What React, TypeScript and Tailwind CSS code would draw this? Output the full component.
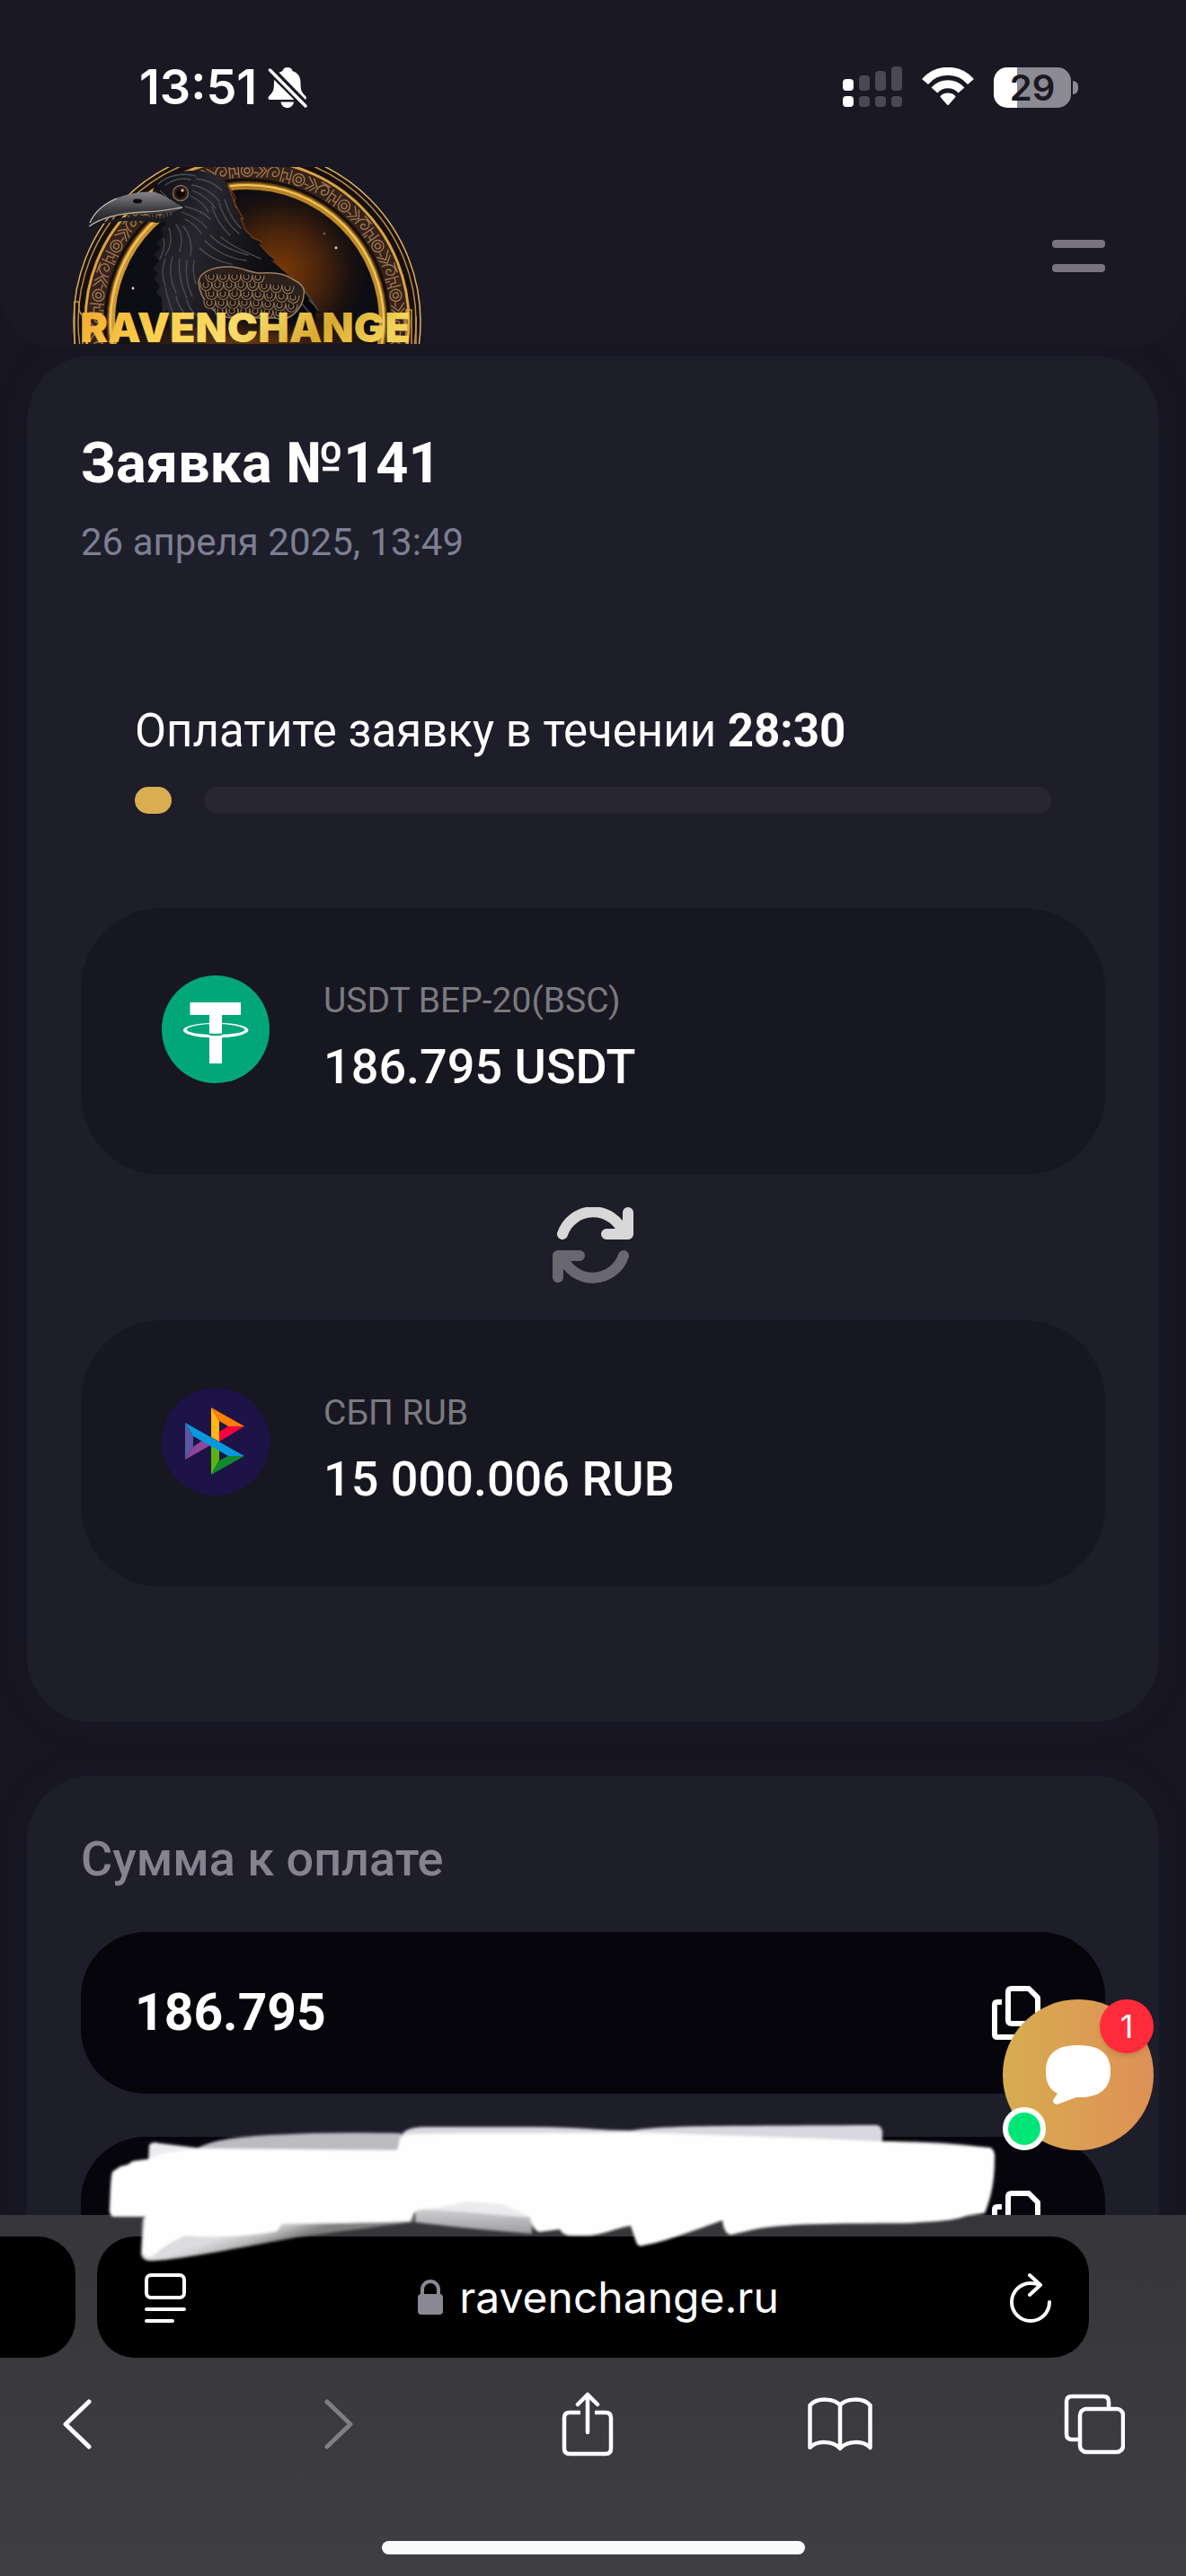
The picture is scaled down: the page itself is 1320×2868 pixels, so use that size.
import { ReactNode } from "react";

type Exchange = {
  label: string;
  value: string;
  icon: ReactNode;
};

// Small runes that run along the stone arch of the logo
const RUNES = Array.from({ length: 41 }, (_, i) => -100 + i * 5);

// Feather scales of the raven's wing, row by row
const FEATHERS = [
  { y: 309, from: 236, to: 292 },
  { y: 318, from: 230, to: 324 },
  { y: 328, from: 236, to: 330 },
  { y: 338, from: 234, to: 328 },
  { y: 347, from: 246, to: 322 },
].flatMap((row) => {
  const cells = [];
  for (let x = row.from; x <= row.to; x += 13) cells.push({ x, y: row.y + Math.max(0, x - 280) / 12 });
  return cells;
});

function RavenLogo() {
  return (
    <svg viewBox="78 186 396 198" className="h-[198px] w-[396px] overflow-visible" role="img" aria-label="RavenChange">
      <defs>
        <clipPath id="frame">
          <rect x="78" y="186" width="396" height="197" />
        </clipPath>
        <radialGradient id="glow" gradientUnits="userSpaceOnUse" cx="312" cy="302" r="98">
          <stop offset="0" stopColor="#7a3a08" />
          <stop offset="0.45" stopColor="#4a240b" />
          <stop offset="0.8" stopColor="#1a1110" />
          <stop offset="1" stopColor="#0d0d14" />
        </radialGradient>
        <linearGradient id="ring" x1="0" y1="0" x2="1" y2="0">
          <stop offset="0" stopColor="#d29a35" />
          <stop offset="0.5" stopColor="#b07a22" />
          <stop offset="1" stopColor="#c58e2c" />
        </linearGradient>
        <linearGradient id="gold" x1="0" y1="0" x2="1" y2="0.15">
          <stop offset="0" stopColor="#f0a52b" />
          <stop offset="0.3" stopColor="#fbcf4c" />
          <stop offset="0.55" stopColor="#f8dc6c" />
          <stop offset="0.8" stopColor="#d9a92f" />
          <stop offset="1" stopColor="#f2d257" />
        </linearGradient>
        <linearGradient id="beak" x1="0" y1="0" x2="0" y2="1">
          <stop offset="0" stopColor="#85858a" />
          <stop offset="0.5" stopColor="#3c3c41" />
          <stop offset="1" stopColor="#17171b" />
        </linearGradient>
        <linearGradient id="body" x1="0" y1="0" x2="1" y2="0.4">
          <stop offset="0" stopColor="#0e0e12" />
          <stop offset="0.35" stopColor="#26262c" />
          <stop offset="0.7" stopColor="#111115" />
          <stop offset="1" stopColor="#09090c" />
        </linearGradient>
        <radialGradient id="base">
          <stop offset="0" stopColor="#a8560d" stopOpacity="0.6" />
          <stop offset="1" stopColor="#5a2a08" stopOpacity="0" />
        </radialGradient>
      </defs>
      <g clipPath="url(#frame)">
        <circle cx="275" cy="358" r="193" fill="#170f0d" stroke="#dcb25e" strokeWidth="1.5" />
        <circle cx="275" cy="358" r="188" fill="none" stroke="#b98f4a" strokeWidth="1.5" />
        <circle cx="275" cy="358" r="180" fill="#35221a" stroke="#d9a441" strokeWidth="3" />
        <g fill="none" stroke="#a07650" strokeWidth="1.4">
          {RUNES.map((angle, i) => (
            <g key={angle} transform={`rotate(${angle} 275 358) translate(275 190)`}>
              {i % 4 === 0 && (
                <>
                  <circle r="6.500" />
                  <circle r="3" />
                </>
              )}
              {i % 4 === 1 && <path d="M-6-8L3-1L-4 7M0-8L7-1L1 7M-7 2H-2" />}
              {i % 4 === 2 && <path d="M-6 6C-8-4 0-10 5-5C9 0 3 6 0 3C-2 0 1-3 3-1M-6-8H6" />}
              {i % 4 === 3 && <path d="M-5-8V8M5-8V8M-5-3H1V3H5M-2 8V3" />}
            </g>
          ))}
        </g>
        <circle cx="275" cy="358" r="158" fill="none" stroke="#150e0b" strokeWidth="3" />
        <circle cx="275" cy="358" r="151" fill="url(#glow)" stroke="url(#ring)" strokeWidth="8" />
        <circle cx="275" cy="358" r="152" fill="none" stroke="#f0c860" strokeWidth="2" />
        <circle cx="275" cy="358" r="155" fill="none" stroke="#6a4415" strokeWidth="1.5" />
        <g fill="#e8dccb">
          <circle cx="148" cy="321" r="1.4" />
          <circle cx="374" cy="276" r="1.4" />
          <circle cx="361" cy="260" r="0.8" />
        </g>
        {/* body */}
        <path
          d="M170 214C172 200 190 191 212 190C234 189 248 198 256 207L253 206L260 220L268 240L266 238L271 254L282 266L292 270L288 268L298 282L306 290L302 290L316 302L330 315L358 350L352 347L350 384H192L186 344L181 352L180 332L174 326L178 318L171 310L176 304L170 300L177 290L171 284L178 276L174 270L182 262L178 256L184 250Z"
          fill="url(#body)"
        />
        <g fill="none" stroke="#4d4d56" strokeWidth="1.3" strokeLinecap="round">
          <path d="M176 205C186 195 204 192 218 196M184 206C194 199 204 198 212 200M218 199C230 200 240 205 247 212" />
          <path d="M214 206C226 208 238 216 244 224M214 212C226 217 234 223 240 232M212 218C220 222 228 228 232 236" />
          <path d="M206 230C216 232 226 236 234 244M202 236C214 240 224 246 230 254M206 244C214 248 220 254 224 260" />
          <path d="M236 230C240 244 248 254 256 262M244 226C248 240 256 252 266 260M250 222C254 236 260 246 268 254" />
          <path d="M196 250C202 258 204 268 200 280M188 254C192 264 190 276 184 284M204 252C212 262 214 272 212 284M182 266C184 272 182 280 178 288" />
          <path d="M234 262C246 274 260 280 276 284M228 268C240 280 256 288 274 290M222 276C232 286 244 292 258 294M246 264C258 274 272 280 290 288" />
          <path d="M184 288C180 298 180 308 184 318M192 286C188 300 190 314 196 326M200 288C198 302 202 318 208 332M208 290C206 304 208 318 214 330M216 290C214 300 216 308 218 316" />
          <path d="M184 320C186 332 190 342 194 352M196 330C198 340 202 346 208 352M208 334C210 342 214 348 220 352M340 324L354 346M334 336L346 350M344 334L352 342" />
        </g>
        <g fill="none" stroke="#7a3d12" strokeWidth="1.2">
          <path d="M254 206L262 220L261 226L271 244L268 243L273 256L282 265L292 269M289 272L300 284L307 289M256 212L263 232" />
        </g>
        {/* beak */}
        <path d="M98 253C104 236 116 224 134 219C148 214 162 213 172 214C182 216 192 224 204 231C190 240 176 238 160 238C134 238 114 243 98 253Z" fill="url(#beak)" />
        <path d="M108 250C128 241 152 240 176 240L200 236C196 244 186 248 174 248C150 244 130 246 108 250Z" fill="#1d1d21" />
        <path d="M99 252C116 240 138 237 160 236C178 236 190 233 203 231" fill="none" stroke="#b7aea5" strokeWidth="1.3" />
        <path d="M100 248C106 234 118 226 130 221" fill="none" stroke="#c4c4c8" strokeWidth="1.3" />
        <ellipse cx="153" cy="224" rx="5" ry="2.4" fill="#0c0c0f" />
        <path d="M172 213L188 227M178 212L190 224M170 217L178 226M162 238V241M166 238V242M170 238V242M174 238V243M178 238V243M182 238V242M186 237V241M190 236V240" stroke="#7c6152" strokeWidth="1" />
        <circle cx="201" cy="215" r="8.500" fill="#2a1d19" stroke="#7d6a5a" strokeWidth="1.5" />
        <circle cx="201" cy="215" r="5" fill="#0e0908" />
        <circle cx="203" cy="212" r="1.8" fill="#c9ad98" />
        {/* wing */}
        <path d="M221 314C222 302 240 296 257 297C272 298 280 305 292 304C306 303 318 305 326 311C336 316 340 322 338 328C338 338 330 350 320 354H257C240 352 222 334 221 314Z" fill="#2c201c" stroke="#9d7f62" strokeWidth="1.5" />
        <g fill="#1f1715" stroke="#947658" strokeWidth="1.2">
          {FEATHERS.map((f) => (
            <path key={`${f.x}-${f.y}`} d={`M${f.x - 7} ${f.y - 4}C${f.x - 8} ${f.y + 8} ${f.x + 6} ${f.y + 9} ${f.x + 6} ${f.y - 3}M${f.x - 3} ${f.y - 3}a3 3 0 1 0 4 0`} />
          ))}
        </g>
        <ellipse cx="275" cy="380" rx="170" ry="26" fill="url(#base)" />
        <path d="M83 384V336H88V346L92 352V384M452 384V345H458V384M463 384V352" fill="none" stroke="#c89a48" strokeWidth="1.5" />
      </g>
      <text x="273" y="381" textAnchor="middle" fontSize="46" className="font-['Inter',sans-serif] font-black" fill="url(#gold)">
        RAVENCHANGE
      </text>
    </svg>
  );
}

function StatusBar() {
  return (
    <div className="flex h-[186px] items-start justify-between pt-[67px] pr-[120px] pl-[155px] font-['Inter',sans-serif] text-white">
      <div className="flex h-[60px] items-center gap-3">
        <span className="text-[54px] leading-[60px] font-semibold">13:51</span>
        <svg viewBox="0 0 44 46" className="h-[46px] w-[44px]" fill="white">
          <path d="M22 1C25 1 27 2.500 27.500 5C34 7 36.500 12 36.500 18C36.500 27 38 29 42 33C43.500 35 43 37 40.500 37H3C0 37 0 34.500 1.500 33C5.500 29 7 27 7 18C7 12 10 7 16.500 5C17 2.500 19 1 22 1Z" />
          <path d="M14.500 39.500H29C28.500 43.500 25.500 46 21.700 46C18 46 15 43.500 14.500 39.500Z" />
          <path d="M4 1L45 43" stroke="#1a1823" strokeWidth="4" />
          <path d="M2 4L42 44" stroke="#1a1823" strokeWidth="8" />
          <path d="M2.500 4L42 44" stroke="white" strokeWidth="3.500" strokeLinecap="round" />
        </svg>
      </div>
      <div className="flex h-[60px] items-center">
        <svg viewBox="0 0 66 46" className="h-[46px] w-[66px]">
          <g fill="#4a4853">
            <rect x="18" y="10" width="12" height="17" rx="4" />
            <rect x="36" y="5" width="12" height="22" rx="4" />
            <rect x="54" y="0" width="12" height="27" rx="4" />
            <rect x="18" y="33" width="12" height="12" rx="4" />
            <rect x="36" y="33" width="12" height="12" rx="4" />
            <rect x="54" y="33" width="12" height="12" rx="4" />
          </g>
          <rect y="14" width="12" height="13" rx="4" fill="white" />
          <rect y="33" width="12" height="12" rx="4" fill="white" />
        </svg>
        <svg viewBox="0 0 58 44" className="ml-[22px] h-[44px] w-[58px]" fill="none" stroke="white" strokeWidth="9">
          <path d="M3.500 16A33.500 33.500 0 0 1 54.500 16" />
          <path d="M14 25.500A20 20 0 0 1 44 25.500" />
          <path d="M21.500 32.500A11 11 0 0 1 36.500 32.500L29 41Z" fill="white" stroke="white" strokeWidth="2" strokeLinejoin="round" />
        </svg>
        <div className="ml-[22px] flex h-[45px] w-[86px] items-center justify-center rounded-[15px] bg-linear-to-r from-white from-30% to-[#8c8a93] to-30%">
          <span className="text-[40px] leading-[45px] font-semibold text-[#1a1823]">29</span>
        </div>
        <span className="ml-[2px] h-[15px] w-[6px] rounded-r-full bg-[#8c8a93]" />
      </div>
    </div>
  );
}

function TetherIcon() {
  return (
    <svg viewBox="0 0 120 120" className="h-[120px] w-[120px] shrink-0">
      <circle cx="60" cy="60" r="60" fill="#03a67a" />
      <path d="M31.500 30H88V44H67V98H53V44H31.500Z" fill="white" />
      <path
        fillRule="evenodd"
        d="M24 61C24 56.500 40 52.700 60 52.700S96.500 56.500 96.500 61S80 69.500 60 69.500S24 65.500 24 61ZM28 60.500C28 63.500 42 66 60 66S92.500 63.500 92.500 60.500S78 54 60 54S28 57 28 60.500Z"
        fill="white"
      />
      <path d="M53 65.500Q60 66.500 67 65.500" fill="none" stroke="#03a67a" strokeWidth="2" />
      <path d="M53 50H67V64H53Z" fill="white" />
    </svg>
  );
}

function SbpIcon() {
  return (
    <svg viewBox="0 0 120 120" className="h-[120px] w-[120px] shrink-0">
      <circle cx="60" cy="60" r="60" fill="#1d1346" />
      <path d="M26 39L35 54V66L26 80Z" fill="#5b57a2" />
      <path d="M26 80L35 66L46 58L56 63Z" fill="#90479a" />
      <path d="M55 22L64 37V60L55 55Z" fill="#fdb813" />
      <path d="M55 22L92 43H74L64 37Z" fill="#ff7f00" />
      <path d="M92 43L64 60V49L74 43Z" fill="#f4053f" />
      <path d="M55 62L64 68V81L55 97Z" fill="#5fb112" />
      <path d="M92 76L55 97L64 81L74 76Z" fill="#0f8a2f" />
      <path d="M26 39L92 76H74L35 54Z" fill="#0798dd" />
    </svg>
  );
}

function SwapIcon() {
  return (
    <svg viewBox="0 0 90 90" className="h-[90px] w-[90px]" fill="none" strokeWidth="12" strokeLinecap="round" strokeLinejoin="round">
      <g stroke="#d8d8d8">
        <path d="M11 30A36 36 0 0 1 79 29" />
        <path d="M84 6V30H60" />
        <path d="M76 20L82 28H74Z" fill="#d8d8d8" strokeWidth="4" />
      </g>
      <g stroke="#696870">
        <path d="M79 54A36 36 0 0 1 11 55" />
        <path d="M6 78V54H30" />
        <path d="M14 64L8 56H16Z" fill="#696870" strokeWidth="4" />
      </g>
    </svg>
  );
}

function ExchangeCard({ label, value, icon }: Exchange) {
  return (
    <div className="flex items-start gap-[60px] rounded-[90px] bg-[#171721] px-[90px] pt-[75px] pb-[90px]">
      {icon}
      <div className="flex flex-col gap-5 pt-1">
        <span className="text-[39px] leading-[48px] text-[#7b7a7f]">{label}</span>
        <span className="text-[54px] leading-[60px] font-medium text-white">{value}</span>
      </div>
    </div>
  );
}

function CopyField({ value, label }: { value: string; label: string }) {
  return (
    <div className="flex h-[180px] items-center justify-between rounded-[72px] bg-[#06050b] pr-[72px] pl-[60px]">
      <span className="text-[57px] leading-[60px] font-bold text-white">{value}</span>
      <button type="button" aria-label={label}>
        <svg viewBox="0 0 54 60" className="h-[60px] w-[54px]" fill="none" stroke="white" strokeWidth="6" strokeLinejoin="round">
          <path d="M11 18H6Q3 18 3 21V54Q3 57 6 57H34Q37 57 37 54V50" />
          <path d="M22 3H41L51 13V38Q51 42 47 42H22Q18 42 18 38V7Q18 3 22 3Z" />
        </svg>
      </button>
    </div>
  );
}

function ChatWidget() {
  return (
    <button
      type="button"
      aria-label="Открыть чат"
      className="absolute right-9 bottom-[72px] flex h-[168px] w-[168px] items-center justify-center rounded-full bg-linear-to-r from-[#d7ac4f] to-[#de9056]"
    >
      <svg viewBox="0 0 72 66" className="h-[66px] w-[72px]" fill="white">
        <path d="M36 0C58 0 72 8 72 29C72 50 58 59 34 58L14 65.500C10 67 6.500 63 9 59.500L13 54C4 49 0 42 0 29C0 8 14 0 36 0Z" />
      </svg>
      <span className="absolute top-0 right-0 flex h-[60px] w-[60px] items-center justify-center rounded-full bg-[#ff2b3a] font-['Inter',sans-serif] text-[36px] leading-[60px] text-white shadow-md">
        1
      </span>
      <span className="absolute bottom-0 left-0 h-12 w-12 rounded-full border-6 border-white bg-[#00e676]" />
    </button>
  );
}

// White marker strokes that hide the wallet address
function MarkerStrokes() {
  return (
    <svg viewBox="0 0 1060 220" className="pointer-events-none absolute -top-[146px] left-20 h-[220px] w-[1060px]" aria-hidden="true">
      <defs>
        <filter id="soft" x="-5%" y="-10%" width="110%" height="120%">
          <feGaussianBlur stdDeviation="1.6" />
        </filter>
        <linearGradient id="tail" gradientUnits="userSpaceOnUse" x1="200" y1="160" x2="208" y2="184">
          <stop offset="0" stopColor="#dcdcde" />
          <stop offset="0.5" stopColor="#bdbdbf" />
          <stop offset="1" stopColor="#808080" />
        </linearGradient>
        <linearGradient id="fold" x1="0" y1="0" x2="0" y2="1">
          <stop offset="0" stopColor="#d2d2d5" />
          <stop offset="1" stopColor="#9c9c9f" />
        </linearGradient>
      </defs>
      <g filter="url(#soft)">
        <path d="M139 72C150 66 165 60 221 57C270 54 320 54 366 55V80H139Z" fill="#bcbbc0" />
        <path d="M79 150L77 190Q79 198 90 197L104 196C150 190 200 180 250 171C290 165 335 160 380 154V140H100Z" fill="url(#tail)" />
        <path d="M85 92L86 68Q90 64 96 66L145 72L110 100Z" fill="#ececef" />
        <path d="M364 76V62Q368 48 392 48H520C560 48 590 52 622 52C660 46 720 47 895 46Q900 46 902 52V64C940 64 990 66 1022 72V90H364Z" fill="#d9d8de" />
        <path d="M382 138L512 148V167C470 164 430 160 382 154Z" fill="url(#fold)" />
        <path d="M384 138L411 126H514V149C470 146 430 142 384 139Z" fill="#ebebee" />
        <path
          d="M45 98L54 92L62 90L68 86L84 84L100 78L118 75L141 72L362 74L366 60Q370 56 382 56C460 54 560 56 624 54C680 56 760 58 900 64L1022 71Q1028 74 1027 84C1027 105 1024 125 1016 144L996 147C980 153 960 153 934 155C870 156 800 154 760 162L734 168Q726 168 724 152C690 164 660 176 636 180Q630 182 628 176L622 158C600 162 590 169 572 169H554Q546 168 543 162L520 165Q512 162 510 148L480 134L440 131L405 138L383 141L376 153C330 155 280 155 234 156L228 164C200 170 150 172 126 169C110 176 98 184 90 192Q80 194 78 186L82 148H46Q41 146 42 138C43 120 43 106 45 98Z"
          fill="#fefefe"
        />
      </g>
    </svg>
  );
}

function ToolbarButton({ label, disabled, className = "justify-center", children }: { label: string; disabled?: boolean; className?: string; children: ReactNode }) {
  return (
    <button type="button" aria-label={label} disabled={disabled} className={`flex h-[72px] w-[72px] items-center ${className}`}>
      {children}
    </button>
  );
}

function BrowserBar() {
  return (
    <footer className="relative shrink-0 bg-linear-to-b from-[#363539] to-[#3f3e43] pt-6 pb-6">
      <div className="flex h-[135px] gap-6 pr-[108px]">
        <div className="w-[84px] rounded-r-[42px] bg-black" />
        <div className="flex flex-1 items-center justify-between rounded-[42px] bg-black pr-[42px] pl-[52px]">
          <button type="button" aria-label="Режим чтения">
            <svg viewBox="0 0 48 56" className="h-[56px] w-[48px]" fill="none" stroke="white" strokeWidth="4" strokeLinecap="round">
              <rect x="3" y="3" width="42" height="25" rx="5" />
              <path d="M3 41H45M3 54H32" />
            </svg>
          </button>
          <a href="#" className="flex items-center gap-[18px] font-['Inter',sans-serif] text-[48px] leading-[60px] text-white">
            <svg viewBox="0 0 28 40" className="h-[40px] w-[28px]">
              <path d="M5 18V11A9 9 0 0 1 23 11V18" fill="none" stroke="#8a8893" strokeWidth="4" />
              <rect y="16" width="28" height="23" rx="4" fill="#8a8893" />
            </svg>
            ravenchange.ru
          </a>
          <button type="button" aria-label="Обновить">
            <svg viewBox="0 0 46 56" className="h-[56px] w-[46px]" fill="none" stroke="white" strokeWidth="4" strokeLinecap="round" strokeLinejoin="round">
              <path d="M44 33A21 21 0 1 1 23 12Q29 12 33 14" />
              <path d="M22 3L34 14L22 25" />
            </svg>
          </button>
        </div>
      </div>
      <nav className="mt-[38px] flex justify-between pr-[66px] pl-[50px]">
        <ToolbarButton label="Назад">
          <svg viewBox="0 0 32 56" className="h-[56px] w-[32px]" fill="none" stroke="white" strokeWidth="5" strokeLinecap="round" strokeLinejoin="round">
            <path d="M29 3L3 28L29 53" />
          </svg>
        </ToolbarButton>
        <ToolbarButton label="Вперёд" disabled className="justify-end pr-3">
          <svg viewBox="0 0 32 56" className="h-[56px] w-[32px]" fill="none" stroke="#7f7e83" strokeWidth="5" strokeLinecap="round" strokeLinejoin="round">
            <path d="M3 3L29 28L3 53" />
          </svg>
        </ToolbarButton>
        <ToolbarButton label="Поделиться" className="justify-end pr-1">
          <svg viewBox="0 0 60 72" className="h-[72px] w-[60px]" fill="none" stroke="white" strokeWidth="4.500" strokeLinejoin="round">
            <path d="M22 23H10Q4 23 4 29V63Q4 69 10 69H50Q56 69 56 63V29Q56 23 50 23H38" />
            <path d="M30 45V3M19 14L30 3L41 14" strokeLinecap="round" />
          </svg>
        </ToolbarButton>
        <ToolbarButton label="Закладки">
          <svg viewBox="0 0 72 60" className="h-[60px] w-[72px]" fill="none" stroke="white" strokeWidth="4.500" strokeLinejoin="round">
            <path d="M36 9C30 1 10 0 2.500 9V56C10 48 28 48 36 57C44 48 62 48 69.500 56V9C62 0 42 1 36 9ZM36 9V57" />
          </svg>
        </ToolbarButton>
        <ToolbarButton label="Вкладки">
          <svg viewBox="0 0 68 68" className="h-[68px] w-[68px]" fill="none" stroke="white" strokeWidth="4.500">
            <path d="M17 51H9Q3 51 3 45V9Q3 3 9 3H44Q50 3 50 9V16" />
            <rect x="18" y="17" width="48" height="48" rx="7" />
          </svg>
        </ToolbarButton>
      </nav>
      <div className="mx-auto mt-[94px] h-[15px] w-[471px] rounded-full bg-[#fafafa]" />
      <MarkerStrokes />
    </footer>
  );
}

export default function App() {
  return (
    <div className="flex h-screen flex-col bg-[#171621] font-['Roboto',sans-serif]">
      <main className="relative min-h-0 flex-1 overflow-hidden">
        <header className="rounded-b-[60px] bg-[#1a1823] pb-[3px]">
          <StatusBar />
          <div className="flex items-center justify-between pr-[90px] pl-[78px]">
            <a href="#">
              <RavenLogo />
            </a>
            <button type="button" aria-label="Меню" className="flex flex-col gap-[18px]">
              <span className="h-[9px] w-[59px] rounded-[4px] bg-[#77747f]" />
              <span className="h-[9px] w-[59px] rounded-[4px] bg-[#77747f]" />
            </button>
          </div>
        </header>

        <section className="mx-[30px] mt-[9px] rounded-[72px] bg-[#1e1d2a] px-[60px] pt-[84px] pb-[150px] shadow-[0_0_30px_#1a1929]">
          <h1 className="text-[63px] leading-[72px] font-bold text-white">Заявка №141</h1>
          <p className="mt-[22px] text-[42px] leading-[60px] text-[#7d7f93]">26 апреля 2025, 13:49</p>

          <div className="mt-[150px] mb-[105px] px-[60px]">
            <p className="text-[51px] leading-[60px] text-white">
              Оплатите заявку в течении <b className="font-bold">28:30</b>
            </p>
            <div className="mt-8 flex h-[30px] gap-9">
              <span className="w-[41px] rounded-[15px] bg-[#d8ae50]" />
              <span className="flex-1 rounded-[15px] bg-[#272631]" />
            </div>
          </div>

          <ExchangeCard label="USDT BEP-20(BSC)" value="186.795 USDT" icon={<TetherIcon />} />
          <div className="flex justify-center py-9">
            <SwapIcon />
          </div>
          <ExchangeCard label="СБП RUB" value="15 000.006 RUB" icon={<SbpIcon />} />
        </section>

        <section className="mx-[30px] mt-[60px] rounded-t-[72px] bg-[#1e1d2a] px-[60px] pt-[63px] pb-[60px] shadow-[0_0_30px_#1a1929]">
          <h2 className="text-[54px] leading-[60px] font-medium text-[#85838f]">Сумма к оплате</h2>
          <div className="mt-[51px] flex flex-col gap-12">
            <CopyField value="186.795" label="Скопировать сумму" />
            <CopyField value="" label="Скопировать адрес" />
          </div>
        </section>

        <ChatWidget />
      </main>
      <BrowserBar />
    </div>
  );
}
